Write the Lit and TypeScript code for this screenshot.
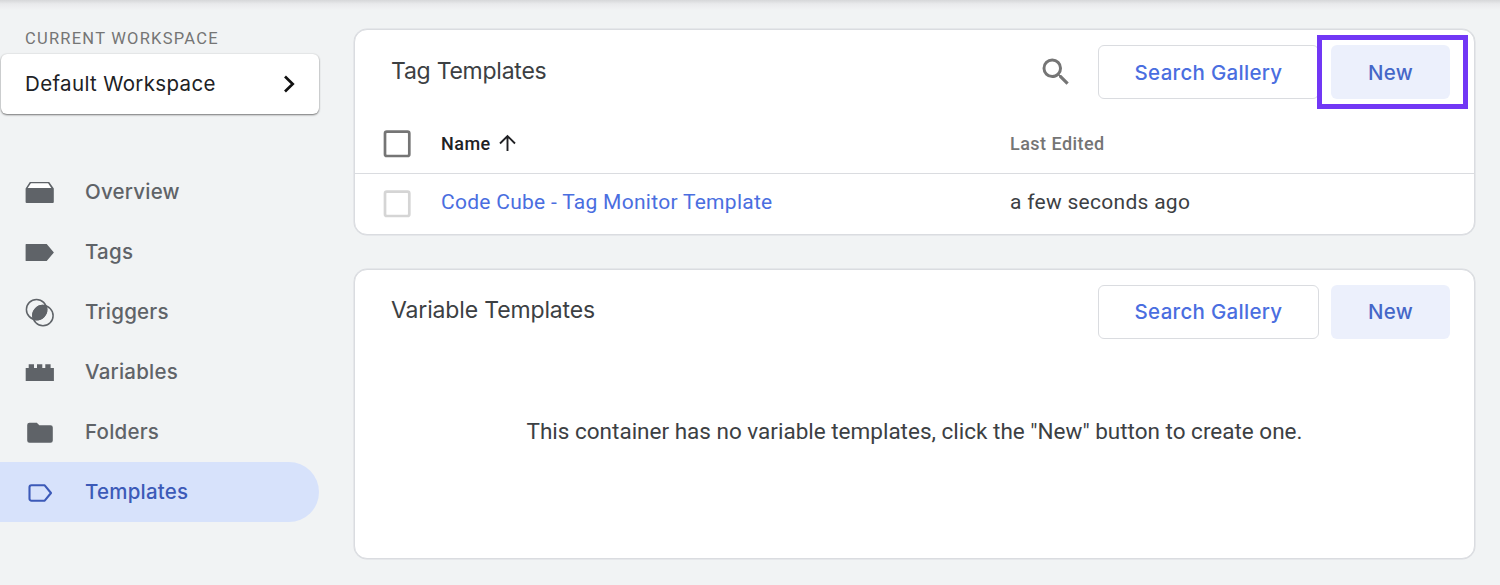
import { LitElement, html, css, svg } from "lit";
import { customElement } from "lit/decorators.js";

const NAV = [
  {
    id: "overview",
    label: "Overview",
    icon: svg`<path d="M5.200 6h18.600l4 6H1.200z" fill="#fff"/><path d="M4.800 5h19.400l4.600 6.500V25a1 1 0 0 1-1 1H1.600a1 1 0 0 1-1-1V11.500zM5.900 6.200 2.700 11h23.600l-3.200-4.800z" fill-rule="evenodd"/>`,
  },
  {
    id: "tags",
    label: "Tags",
    icon: svg`<path d="M1.200 7H21.700l7.200 8.500-7.200 8.500H1.200a.6.6 0 0 1-.6-.6V7.600a.6.6 0 0 1 .6-.6z"/>`,
  },
  {
    id: "triggers",
    label: "Triggers",
    icon: svg`<g fill="none" stroke="currentColor" stroke-width="1.500"><circle cx="11.500" cy="12.500" r="10.100"/><circle cx="18" cy="18.700" r="10.100"/></g><path d="M21 9.050A10.100 10.100 0 0 0 8.500 22.150 10.100 10.100 0 0 0 21 9.050z" stroke="currentColor" stroke-width="1.500"/>`,
  },
  {
    id: "variables",
    label: "Variables",
    icon: svg`<path d="M.7 11h3V7.200H9V11h3V7.200h5.300V11h3V7.200h5.300V11h3.300v13H.7z"/>`,
  },
  {
    id: "folders",
    label: "Folders",
    icon: svg`<path d="M4.500 5.800h7.300l2.500 2.500h11.200a2.300 2.300 0 0 1 2.300 2.300v12.900a2.300 2.300 0 0 1-2.300 2.300H4.500a2.300 2.300 0 0 1-2.300-2.300V8.100A2.300 2.300 0 0 1 4.500 5.800z"/>`,
  },
  {
    id: "templates",
    label: "Templates",
    icon: svg`<path d="M6.500 8.300h13.200L26 16l-6.300 7.700H6.500a2 2 0 0 1-2-2V10.300a2 2 0 0 1 2-2z" fill="none" stroke="currentColor" stroke-width="2.100" stroke-linejoin="round"/>`,
  },
];

@customElement("workspace-sidebar")
class WorkspaceSidebar extends LitElement {
  static styles = css`
    :host {
      display: block;
      width: 320px;
      flex: none;
      font-family: Inter, sans-serif;
    }
    .caption {
      padding: 29px 0 0 25px;
      height: 25px;
      font: 400 16.5px/20px Roboto, sans-serif;
      letter-spacing: 1.24px;
      color: #757575;
      white-space: nowrap;
    }
    .picker {
      display: flex;
      align-items: center;
      justify-content: space-between;
      box-sizing: border-box;
      height: 60px;
      margin: 0 1px;
      padding: 0 22px 0 24px;
      border-radius: 6px;
      background: #fff;
      box-shadow: 0 1px 2px rgba(0, 0, 0, 0.5), 0 0 2px rgba(0, 0, 0, 0.1);
      color: #202124;
      font-size: 20.5px;
      letter-spacing: 0.35px;
    }
    .picker-label {
      padding-bottom: 1px;
    }
    .chevron {
      display: block;
      width: 16px;
      height: 20px;
    }
    .nav {
      padding-top: 48px;
    }
    .item {
      display: flex;
      align-items: center;
      height: 60px;
      padding-left: 25px;
      gap: 30px;
      margin-right: 1px;
      color: #5f6368;
      font-size: 20.5px;
      font-weight: 500;
      letter-spacing: 0.22px;
      border-radius: 0 30px 30px 0;
    }
    .item.active {
      background: #d7e2fb;
      color: #3c5ab8;
    }
    .item-label {
      padding-bottom: 2px;
    }
    .icon {
      display: block;
      width: 30px;
      height: 30px;
      fill: currentColor;
    }
  `;
  render() {
    return html`
      <div class="caption">CURRENT WORKSPACE</div>
      <div class="picker">
        <span class="picker-label">Default Workspace</span>
        <svg class="chevron" viewBox="0 0 16 20">
          <path d="M4 2.500 11.700 10 4 17.500" fill="none" stroke="#111" stroke-width="2.700" />
        </svg>
      </div>
      <nav class="nav">
        ${NAV.map(
          (n) => html`<div class="item ${n.id === "templates" ? "active" : ""}">
            <svg class="icon" viewBox="0 0 30 30">${n.icon}</svg>
            <span class="item-label">${n.label}</span>
          </div>`
        )}
      </nav>
    `;
  }
}

@customElement("app-root")
class AppRoot extends LitElement {
  static styles = css`
    :host {
      display: flex;
      box-sizing: border-box;
      width: 100%;
      height: 585px;
      overflow: hidden;
      background: linear-gradient(#d6d7d9, #e9eaec 4px, #f1f3f4 10px);
      font-family: Roboto, sans-serif;
      color: #3c4043;
    }
    .main {
      flex: 1;
      display: flex;
      flex-direction: column;
      gap: 34px;
      padding: 29px 25px 0 34px;
    }
    .card {
      box-sizing: border-box;
      border: 1px solid #dadce0;
      border-radius: 13px;
      background: #fff;
      box-shadow: 0 0 0 0.5px #dadce0;
    }
    .tags {
      height: 206px;
    }
    .variables {
      height: 290px;
    }
    .head {
      display: flex;
      align-items: center;
      height: 54px;
      padding: 15px 24px 0 36px;
    }
    .title {
      flex: 1;
      font: 400 23px/30px Inter, sans-serif;
      letter-spacing: -0.15px;
      padding-bottom: 4px;
    }
    .tags .title {
      padding-bottom: 2px;
      letter-spacing: -0.25px;
    }
    .search {
      width: 36px;
      height: 36px;
      margin-right: 24px;
      fill: #757575;
    }
    .button {
      box-sizing: border-box;
      display: flex;
      align-items: center;
      justify-content: center;
      height: 54px;
      border-radius: 6px;
      font: 500 20.500px/24px Inter, sans-serif;
      letter-spacing: 0.3px;
    }
    .tags .button {
      padding-top: 2px;
    }
    .gallery {
      width: 221px;
      border: 1px solid #dadce0;
      color: #4a6ee0;
    }
    .create {
      position: relative;
      width: 119px;
      margin-left: 12px;
      background: #ecf0fc;
      color: #4567c8;
    }
    .highlight {
      position: absolute;
      box-sizing: border-box;
      left: -14px;
      top: -10px;
      width: 151px;
      height: 74px;
      border: 5px solid #7137f5;
    }
    .row {
      display: grid;
      grid-template-columns: 57px 569px 1fr;
      align-items: center;
      box-sizing: border-box;
      height: 60px;
      padding-left: 29px;
      font-size: 21px;
      letter-spacing: 0.28px;
    }
    .row .cell {
      padding-bottom: 4px;
    }
    .labels {
      height: 75px;
      padding-top: 15px;
      border-bottom: 1px solid #dadce0;
      font-size: 18px;
      font-weight: 500;
      letter-spacing: 0.46px;
    }
    .box {
      display: block;
      width: 28px;
      height: 28px;
      margin-left: -1px;
      fill: none;
      stroke: #757575;
      stroke-width: 2.7px;
    }
    .box.dim {
      stroke: #d5d5d5;
    }
    .name {
      display: flex;
      align-items: center;
      gap: 8px;
      color: #202124;
    }
    .arrow {
      width: 18px;
      height: 18px;
      margin-bottom: 2px;
    }
    .edited {
      color: #757575;
    }
    .link {
      color: #4a6ee0;
    }
    .empty {
      padding-top: 77px;
      text-align: center;
      font-size: 22.500px;
      line-height: 30px;
    }
  `;

  private actions(highlighted: boolean) {
    return html`
      <div class="button gallery">Search Gallery</div>
      <div class="button create">
        New${highlighted ? html`<div class="highlight"></div>` : null}
      </div>
    `;
  }

  private checkbox(dim: boolean) {
    return html`<svg class="box ${dim ? "dim" : ""}" viewBox="0 0 28 28">
      <rect x="2" y="1.700" width="24.300" height="24.300" rx="1.800" />
    </svg>`;
  }

  render() {
    return html`
      <workspace-sidebar></workspace-sidebar>
      <main class="main">
        <section class="card tags">
          <div class="head">
            <div class="title">Tag Templates</div>
            <svg class="search" viewBox="0 0 24 24">
              <path
                d="M15.500 14h-.79l-.28-.27A6.471 6.471 0 0 0 16 9.500 6.500 6.500 0 1 0 9.500 16c1.610 0 3.090-.59 4.230-1.570l.27.28v.79l5 4.990L20.490 19l-4.990-5zm-6 0C7.010 14 5 11.990 5 9.500S7.010 5 9.500 5 14 7.010 14 9.500 11.990 14 9.500 14z"
              />
            </svg>
            ${this.actions(true)}
          </div>
          <div class="row labels">
            ${this.checkbox(false)}
            <div class="name">
              Name
              <svg class="arrow" viewBox="0 0 18 18">
                <path d="M8.500 17V2M1 9.500 8.500 2 16 9.500" fill="none" stroke="#202124" stroke-width="1.900" />
              </svg>
            </div>
            <div class="edited">Last Edited</div>
          </div>
          <div class="row">
            ${this.checkbox(true)}
            <div class="cell link">Code Cube - Tag Monitor Template</div>
            <div class="cell">a few seconds ago</div>
          </div>
        </section>
        <section class="card variables">
          <div class="head">
            <div class="title">Variable Templates</div>
            ${this.actions(false)}
          </div>
          <div class="empty">
            This container has no variable templates, click the "New" button to create one.
          </div>
        </section>
      </main>
    `;
  }
}
